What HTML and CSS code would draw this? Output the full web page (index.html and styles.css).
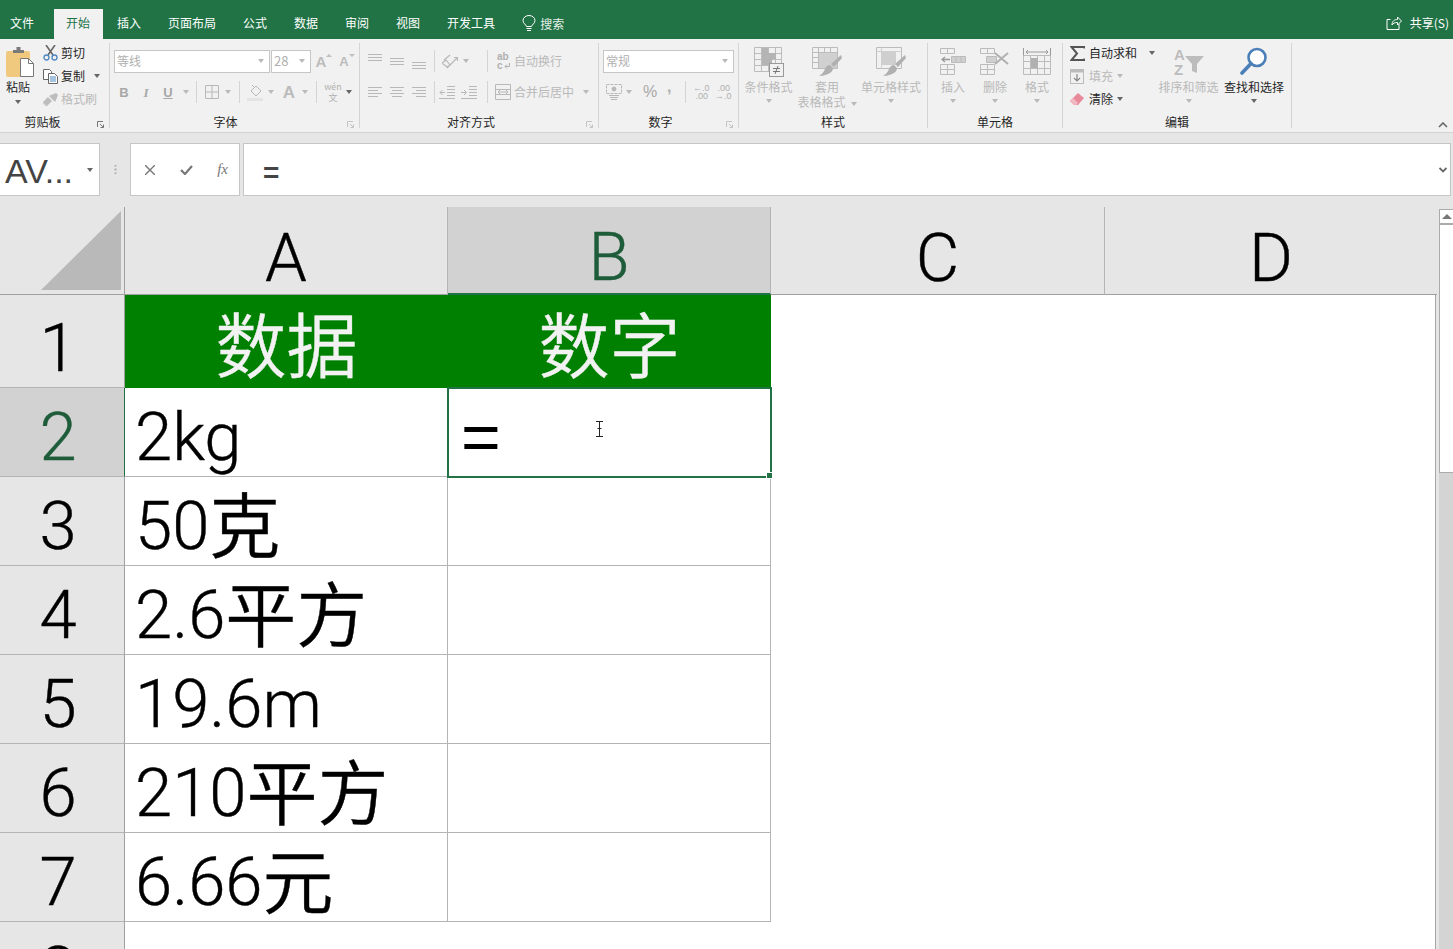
FILE: index.html
```html
<!DOCTYPE html>
<html lang="zh">
<head>
<meta charset="utf-8">
<title>Excel</title>
<link rel="stylesheet" href="styles.css">
</head>
<body>
<header class="titlebar">
  <nav class="tabs">
    <span class="tab tab-file">文件</span>
    <span class="tab active">开始</span>
    <span class="tab">插入</span>
    <span class="tab">页面布局</span>
    <span class="tab">公式</span>
    <span class="tab">数据</span>
    <span class="tab">审阅</span>
    <span class="tab">视图</span>
    <span class="tab">开发工具</span>
    <span class="tab tab-search">
      <svg class="ic" width="14" height="18" viewBox="0 0 14 18" fill="none" stroke="#fff" stroke-width="1"><path d="M4.5 11.5C4 9.500 1 8.500 1 5.500a6 5 0 0 1 12 0c0 3-3 4-3.500 6z"/><path d="M4.500 13.500h5M5 15.500h4"/></svg>
      <span>搜索</span>
    </span>
  </nav>
  <div class="share">
    <svg class="ic" width="16" height="16" viewBox="0 0 16 16" fill="none" stroke="#fff" stroke-width="1"><path d="M4.500 5.500H1v10h12V10"/><path d="M6 11c0-4 2.500-5.500 5.500-5.500V3L15.500 7l-4 4V8.500C9 8.500 7 9 6 11z"/></svg>
    <span>共享(S)</span>
  </div>
</header>

<section class="ribbon">
  <div class="group g-clip">
    <div class="body clip-body">
      <div class="big paste">
        <svg class="ic" width="29" height="31" viewBox="0 0 29 31"><rect x="0" y="4" width="24" height="26" rx="2" fill="#f0c97e"/><path d="M7 6V3h3.500V0h4v3H18v3z" fill="#7a7a7a"/><path d="M14.500 11.500h8l5 5v13h-13z" fill="#fff" stroke="#777"/><path d="M22.500 11.500v5h5" fill="none" stroke="#777"/></svg>
        <span class="lbl dark">粘贴</span>
        <i class="caret dk"></i>
      </div>
      <div class="small-col">
        <div class="small">
          <svg class="ic" width="15" height="16" viewBox="0 0 15 16" fill="none"><path d="M3 0l7 10M12 0L5 10" stroke="#666" stroke-width="1.600"/><circle cx="3.500" cy="12.500" r="2.500" stroke="#4d86c0" stroke-width="1.300"/><circle cx="11.500" cy="12.500" r="2.500" stroke="#4d86c0" stroke-width="1.300"/></svg>
          <span class="dark">剪切</span>
        </div>
        <div class="small">
          <svg class="ic" width="15" height="15" viewBox="0 0 15 15" fill="#fff" stroke="#666"><path d="M.5.500h6l2 2v8h-8z"/><path d="M5.500 4.500h6l3 3v7h-9z"/><path d="M7 8h6M7 10h6M7 12h6" stroke="#4d86c0"/></svg>
          <span class="dark">复制</span>
          <i class="caret dk copy-caret"></i>
        </div>
        <div class="small">
          <svg class="ic" width="15" height="13" viewBox="0 0 15 13" fill="#bdbdbd"><path d="M0 9l5-5 4 4-5 5H2l1-2-2 1z"/><path d="M6 3l2-1 5-2 2 2-2 5-1 2z"/></svg>
          <span class="mute">格式刷</span>
        </div>
      </div>
    </div>
    <div class="label lab-clip">剪贴板</div>
    <svg class="launch" width="7" height="7" viewBox="0 0 7 7" fill="none" stroke="#777"><path d="M.5 6V.5H6M3 3l3.500 3.500M6.500 3.500v3h-3"/></svg>
  </div>

  <div class="group g-font">
    <div class="body rows">
      <div class="row font-r1">
        <div class="select s-font"><span>等线</span><i class="caret"></i></div>
        <div class="select s-size"><span>28</span><i class="caret"></i></div>
        <div class="growa"><span class="a-big">A</span><i class="up"></i></div>
        <div class="growa"><span class="a-small">A</span><i class="down"></i></div>
      </div>
      <div class="row font-r2">
        <span class="btn w22 fb">B</span>
        <span class="btn w22 fi">I</span>
        <span class="btn w22 fu">U</span>
        <span class="btn w14"><i class="caret"></i></span>
        <i class="sep ml3"></i>
        <span class="btn w22 ml4"><svg class="ic" width="14" height="14" viewBox="0 0 14 14" fill="none" stroke="#b8b8b8"><path d="M.5.500h13v13H.5zM7 .5v13M.5 7h13"/></svg></span>
        <span class="btn w10"><i class="caret"></i></span>
        <i class="sep ml6"></i>
        <span class="btn w22 ml4"><svg class="ic" width="16" height="17" viewBox="0 0 16 17" fill="none" stroke="#b8b8b8"><path d="M4 7l5-5 5 5-5 5z"/><path d="M5 1l3 3"/><rect x="0" y="14" width="16" height="3" fill="#e4e4e4" stroke="none"/></svg></span>
        <span class="btn w10"><i class="caret"></i></span>
        <span class="btn w22 ml2 fa">A</span>
        <span class="btn w10"><i class="caret"></i></span>
        <i class="sep ml6"></i>
        <span class="btn w22 ml5 wen"><span>wén</span><span>文</span></span>
        <span class="btn w10"><i class="caret dk"></i></span>
      </div>
    </div>
    <div class="label lab-font">字体</div>
    <svg class="launch" width="7" height="7" viewBox="0 0 7 7" fill="none" stroke="#c4c4c4"><path d="M.5 6V.5H6M3 3l3.500 3.500M6.500 3.500v3h-3"/></svg>
  </div>

  <div class="group g-align">
    <div class="body rows">
      <div class="row align-r1">
        <span class="btn w22"><svg class="ic" width="14" height="16" viewBox="0 0 14 16" stroke="#b8b8b8"><path d="M0 1.500h14M0 4.500h14M0 7.500h14"/></svg></span>
        <span class="btn w22"><svg class="ic" width="14" height="16" viewBox="0 0 14 16" stroke="#b8b8b8"><path d="M0 5.500h14M0 8.500h14M0 11.500h14"/></svg></span>
        <span class="btn w22"><svg class="ic" width="14" height="16" viewBox="0 0 14 16" stroke="#b8b8b8"><path d="M0 9.500h14M0 12.500h14M0 15.500h14"/></svg></span>
        <i class="sep ml4"></i>
        <span class="btn w22 ml4"><svg class="ic" width="16" height="15" viewBox="0 0 16 15" fill="none" stroke="#b8b8b8" stroke-width="1.200"><path d="M2 6l6-5M0 9l5 4 3-2-4-5zM5 14L15 4M12 3.500h3.500V7"/></svg></span>
        <span class="btn w10"><i class="caret"></i></span>
        <i class="sep ml16"></i>
        <span class="btn-t ml9"><span class="abc"><span>ab</span><span class="abc2">c<svg class="ic" width="6" height="6" viewBox="0 0 6 6" fill="none" stroke="#b0b0b0"><path d="M5.500 0v3.500H1M3 1.500L1 3.500 3 5.500"/></svg></span></span><span class="mute">自动换行</span></span>
      </div>
      <div class="row align-r2">
        <span class="btn w22"><svg class="ic" width="14" height="11" viewBox="0 0 14 11" stroke="#b8b8b8"><path d="M0 .5h14M0 3.500h10M0 6.500h14M0 9.500h10"/></svg></span>
        <span class="btn w22"><svg class="ic" width="14" height="11" viewBox="0 0 14 11" stroke="#b8b8b8"><path d="M0 .5h14M2 3.500h10M0 6.500h14M2 9.500h10"/></svg></span>
        <span class="btn w22"><svg class="ic" width="14" height="11" viewBox="0 0 14 11" stroke="#b8b8b8"><path d="M0 .5h14M4 3.500h10M0 6.500h14M4 9.500h10"/></svg></span>
        <i class="sep ml4"></i>
        <span class="btn w22 ml1"><svg class="ic" width="16" height="13" viewBox="0 0 16 13" fill="none" stroke="#b8b8b8"><path d="M8 .5h8M8 3.500h8M8 6.500h8M8 9.500h8M0 12.500h16M6 6.500H1M3.500 4l-2.500 2.500L3.500 9"/></svg></span>
        <span class="btn w22"><svg class="ic" width="16" height="13" viewBox="0 0 16 13" fill="none" stroke="#b8b8b8"><path d="M8 .5h8M8 3.500h8M8 6.500h8M8 9.500h8M0 12.500h16M0 6.500h5M3 4l2.500 2.500L3 9"/></svg></span>
        <i class="sep ml7"></i>
        <span class="btn-t ml7"><svg class="ic" width="16" height="16" viewBox="0 0 16 16" fill="none" stroke="#b8b8b8"><path d="M.5.500h15v15H.5zM.5 5.500h15M.5 10.500h15M3 8h10M3 8l2-2M3 8l2 2M13 8l-2-2M13 8l-2 2"/></svg><span class="mute">合并后居中</span></span>
        <span class="btn w10 ml7"><i class="caret"></i></span>
      </div>
    </div>
    <div class="label lab-align">对齐方式</div>
    <svg class="launch" width="7" height="7" viewBox="0 0 7 7" fill="none" stroke="#c4c4c4"><path d="M.5 6V.5H6M3 3l3.500 3.500M6.500 3.500v3h-3"/></svg>
  </div>

  <div class="group g-num">
    <div class="body rows">
      <div class="row num-r1">
        <div class="select s-num"><span>常规</span><i class="caret"></i></div>
      </div>
      <div class="row num-r2">
        <span class="btn w16"><svg class="ic" width="16" height="16" viewBox="0 0 16 16" fill="none" stroke="#b8b8b8"><rect x=".5" y=".5" width="15" height="9" stroke-dasharray="3 1"/><circle cx="8" cy="5" r="2" fill="#b8b8b8"/><path d="M3 11.500h10M4 13.500h8M5 15.500h6"/></svg></span>
        <span class="btn w14"><i class="caret"></i></span>
        <span class="pct">%</span>
        <span class="comma">,</span>
        <i class="sep ml12"></i>
        <span class="dec ml7"><span>←.0</span><span>.00</span></span>
        <span class="dec ml7"><span>.00</span><span>→.0</span></span>
      </div>
    </div>
    <div class="label lab-num">数字</div>
    <svg class="launch" width="7" height="7" viewBox="0 0 7 7" fill="none" stroke="#c4c4c4"><path d="M.5 6V.5H6M3 3l3.500 3.500M6.500 3.500v3h-3"/></svg>
  </div>

  <div class="group g-style">
    <div class="body bigs style-body">
      <div class="big w49">
        <svg class="ic" width="30" height="30" viewBox="0 0 30 30" fill="none"><path d="M.5 .5h27v24H.5zM.5 6.500h27M.5 12.500h27M.5 18.500h27M7.500 .5v24M14.500 .5v24M21.500 .5v24" stroke="#bcbcbc"/><path d="M8 1h6v5h8v6h-4v6H8z" fill="#b4b4b4"/><rect x="15.500" y="16.500" width="14" height="13" fill="#f1f1f1" stroke="#999"/><path d="M19 21.500h7M19 24.500h7M24 19l-3 8" stroke="#777"/></svg>
        <span class="lbl mute">条件格式</span>
        <i class="caret"></i>
      </div>
      <div class="big w58">
        <svg class="ic" width="30" height="30" viewBox="0 0 30 30" fill="none"><path d="M.5 .5h25v21H.5zM.5 5.500h25M.5 10.500h25M.5 15.500h25M6.500 .5v21M12.500 .5v21M18.500 .5v21" stroke="#bcbcbc"/><rect x="7" y="6" width="18" height="15" fill="#d0d0d0"/><path d="M29 8l1 3-8 9-3-3zM18 18l3 3c0 3-2 5-5 6 -3 1-5 2-9 2 3-2 5-4 6-7 1-3 3-4 5-4z" fill="#b0b0b0"/></svg>
        <span class="lbl mute">套用</span>
        <span class="lbl mute two">表格格式<i class="caret inl"></i></span>
      </div>
      <div class="big w60">
        <svg class="ic" width="30" height="30" viewBox="0 0 30 30" fill="none"><path d="M.5 .5h25v21H.5z" stroke="#bcbcbc"/><path d="M.5 4.500h25M5.500 .5v21" stroke="#d0d0d0"/><rect x="6" y="5" width="14" height="13" fill="#cfcfcf"/><path d="M29 8l1 3-8 9-3-3zM18 18l3 3c0 3-2 5-5 6-3 1-5 2-9 2 3-2 5-4 6-7 1-3 3-4 5-4z" fill="#b0b0b0"/></svg>
        <span class="lbl mute">单元格样式</span>
        <i class="caret"></i>
      </div>
    </div>
    <div class="label">样式</div>
  </div>

  <div class="group g-cell">
    <div class="body bigs cell-body">
      <div class="big w26">
        <svg class="ic" width="26" height="30" viewBox="0 0 26 30" fill="none" stroke="#bcbcbc"><path d="M.5 1.500h14v5H.5zM7.500 1.500v5M.5 17.500h14v10H.5zM.5 22.500h14M7.500 17.500v10"/><path d="M11.500 9.500h14v6h-14zM16 9.500v6M21 9.500v6" fill="#d0d0d0"/><path d="M10 12.500H2M5 10l-3 2.500L5 15" stroke="#999" stroke-width="1.300"/></svg>
        <span class="lbl mute">插入</span>
        <i class="caret"></i>
      </div>
      <div class="big w26">
        <svg class="ic" width="30" height="30" viewBox="0 0 30 30" fill="none" stroke="#bcbcbc"><path d="M.5 1.500h14v5H.5zM7.500 1.500v5M.5 17.500h14v10H.5zM.5 22.500h14M7.500 17.500v10"/><path d="M6.500 9.500h10v6h-10z" fill="#d0d0d0"/><path d="M15 6l13 11M28 6L15 17" stroke="#b0b0b0" stroke-width="2"/></svg>
        <span class="lbl mute">删除</span>
        <i class="caret"></i>
      </div>
      <div class="big w26">
        <svg class="ic" width="28" height="30" viewBox="0 0 28 30" fill="none" stroke="#bcbcbc"><path d="M.5 1v8M27.500 1v8M3 5h22M3 5l2-2M3 5l2 2M25 5l-2-2M25 5l-2 2" stroke="#999"/><path d="M.5 8.500h27v19H.5zM.5 14.500h27M.5 21.500h27M7.500 8.500v19M14.500 8.500v19M21.500 8.500v19"/><rect x="8" y="11" width="7" height="10" fill="#b0b0b0" stroke="none"/></svg>
        <span class="lbl mute">格式</span>
        <i class="caret"></i>
      </div>
    </div>
    <div class="label">单元格</div>
  </div>

  <div class="group g-edit">
    <div class="body edit-body">
      <div class="small-col edit-col">
        <div class="small">
          <svg class="ic" width="15" height="15" viewBox="0 0 15 15" fill="none" stroke="#555" stroke-width="2"><path d="M14.500 2.500V1H1.500L7 7.500 1.500 14H14.500v-1.500"/></svg>
          <span class="dark">自动求和</span>
          <i class="caret dk sum-caret"></i>
        </div>
        <div class="small">
          <svg class="ic i14" width="14" height="15" viewBox="0 0 14 15" fill="none" stroke="#bcbcbc"><rect x=".5" y=".5" width="13" height="14"/><rect x="0" y="0" width="14" height="3" fill="#bcbcbc"/><path d="M7 5v7M4 9l3 3 3-3" stroke="#888" stroke-width="1.200"/></svg>
          <span class="mute">填充</span>
          <i class="caret"></i>
        </div>
        <div class="small">
          <svg class="ic i14" width="14" height="13" viewBox="0 0 14 13"><path d="M0 8l8-8 6 5-6 7H4z" fill="#e98a9a"/><path d="M0 8l3-3 5 5-2 2H4z" fill="#f2b8c1"/></svg>
          <span class="dark">清除</span>
          <i class="caret dk"></i>
        </div>
      </div>
      <div class="big w61">
        <svg class="ic sort-ic" width="30" height="30" viewBox="0 0 30 30" fill="#bcbcbc"><text x="0" y="13" class="az">A</text><text x="0" y="28" class="az">Z</text><path d="M11 9h19l-7 8v9l-5-2v-7z"/></svg>
        <span class="lbl mute">排序和筛选</span>
        <i class="caret"></i>
      </div>
      <div class="big w60 find">
        <svg class="ic" width="28" height="28" viewBox="0 0 28 28" fill="none" stroke="#4a7fb8"><circle cx="17" cy="10.500" r="8.500" stroke-width="2.600" fill="#fff"/><path d="M11 16.500L2 26" stroke-width="3.600" stroke-linecap="round"/></svg>
        <span class="lbl dark">查找和选择</span>
        <i class="caret dk"></i>
      </div>
    </div>
    <div class="label">编辑</div>
  </div>

  <svg class="collapse" width="10" height="6" viewBox="0 0 10 6" fill="none" stroke="#666" stroke-width="1.600"><path d="M1 5l4-4 4 4"/></svg>
</section>

<section class="fbar">
  <div class="namebox"><span>AV...</span><i class="caret dk"></i></div>
  <div class="dots"></div>
  <div class="fbtns">
    <svg class="ic" width="10" height="10" viewBox="0 0 10 10" stroke="#777" stroke-width="1.400"><path d="M0 0l10 10M10 0L0 10"/></svg>
    <svg class="ic" width="13" height="10" viewBox="0 0 13 10" fill="none" stroke="#777" stroke-width="2.200"><path d="M1 5l4 4 7-8"/></svg>
    <span class="fx">fx</span>
  </div>
  <div class="finput"><span class="ftext">=</span>
    <svg class="ic fchev" width="8" height="6" viewBox="0 0 8 6" fill="none" stroke="#666" stroke-width="1.800"><path d="M.5 1l3.500 3.500L7.500 1"/></svg>
  </div>
</section>

<main class="sheetwrap">
  <div class="sheet">
    <div class="corner"><svg width="80" height="79" viewBox="0 0 80 79"><path d="M80 0v79H0z" fill="#b9b9b9"/></svg></div>
    <div class="colh">A</div>
    <div class="colh sel">B</div>
    <div class="colh">C</div>
    <div class="colh last">D</div>

    <div class="rowh r1">1</div>
    <div class="cell head">数据</div>
    <div class="cell head">数字</div>
    <div class="blank"></div>

    <div class="rowh sel">2</div>
    <div class="cell">2kg</div>
    <div class="cell current">=
      <svg class="ibeam" width="7" height="16" viewBox="0 0 7 16" fill="none" stroke="#222"><path d="M0 .5h7M0 15.500h7M3.500 .5v15M1.500 7.500h4"/></svg>
    </div>
    <div class="blank"></div>

    <div class="rowh">3</div>
    <div class="cell"><span>50</span><span class="cjk">克</span></div>
    <div class="cell"></div>
    <div class="blank"></div>

    <div class="rowh">4</div>
    <div class="cell"><span>2.6</span><span class="cjk">平方</span></div>
    <div class="cell"></div>
    <div class="blank"></div>

    <div class="rowh">5</div>
    <div class="cell">19.6m</div>
    <div class="cell"></div>
    <div class="blank"></div>

    <div class="rowh">6</div>
    <div class="cell"><span>210</span><span class="cjk">平方</span></div>
    <div class="cell"></div>
    <div class="blank"></div>

    <div class="rowh">7</div>
    <div class="cell"><span>6.66</span><span class="cjk">元</span></div>
    <div class="cell"></div>
    <div class="blank"></div>

    <div class="rowh">8</div>
    <div class="blank wide"></div>
  </div>
  <aside class="vscroll">
    <div class="sb-up"><i class="up dkup"></i></div>
    <div class="sb-thumb"></div>
  </aside>
</main>
</body>
</html>
```
FILE: styles.css
```css
* { box-sizing: border-box; }
html, body { margin: 0; padding: 0; }
body {
  width: 1453px;
  height: 949px;
  overflow: hidden;
  background: #e6e6e6;
  font: 12px/15px "Noto Sans CJK SC", "Liberation Sans", sans-serif;
  color: #262626;
}
i { display: block; font-style: normal; }
.ic { display: block; flex: none; }

/* title / tabs */
.titlebar {
  height: 39px;
  background: #217346;
  display: flex;
  justify-content: space-between;
  align-items: flex-end;
  color: #fff;
}
.tabs { display: flex; align-items: flex-end; }
.tab {
  height: 30px;
  line-height: 28px;
  padding: 0 13px;
  margin-right: 1px;
  white-space: nowrap;
}
.tab-file { padding: 0 10px; margin-right: 10px; }
.tab.active { background: #f1f1f1; color: #217346; padding: 0 12px; margin-right: 1px; width: 49px; }
.tab-search { display: flex; align-items: center; gap: 4px; padding-left: 13px; color: #e6f0ea; }
.share { display: flex; align-items: center; gap: 8px; height: 34px; padding-right: 4px; }

/* ribbon */
.ribbon {
  height: 94px;
  padding: 4px 0;
  background: #f1f1f1;
  border-bottom: 1px solid #d4d4d4;
  display: flex;
}
.group {
  position: relative;
  height: 85px;
  border-right: 1px solid #d4d4d4;
  display: flex;
  flex-direction: column;
  flex: none;
}
.g-clip { width: 110px; }
.g-font { width: 250px; }
.g-align { width: 239px; }
.g-num { width: 140px; }
.g-style { width: 189px; }
.g-cell { width: 135px; }
.g-edit { width: 229px; }
.body { flex: 1; display: flex; min-height: 0; }
.label { height: 13px; line-height: 13px; text-align: center; color: #262626; }
.lab-clip { padding-right: 24px; }
.lab-font { padding-right: 18px; }
.lab-align { padding-right: 16px; }
.lab-num { padding-right: 16px; }
.launch { position: absolute; right: 5px; bottom: 0; }
.collapse { align-self: flex-end; margin: 0 5px 0 auto; }
.dark { color: #262626; }
.mute { color: #b9b9b9; }

/* carets */
.caret {
  width: 0; height: 0; flex: none;
  border-left: 3.5px solid transparent;
  border-right: 3.5px solid transparent;
  border-top: 4px solid #b9b9b9;
}
.caret.dk { border-top-color: #666; }
.caret.inl { display: inline-block; margin-left: 5px; vertical-align: middle; }
.up, .down { width: 0; height: 0; border-left: 3px solid transparent; border-right: 3px solid transparent; }
.up { border-bottom: 3px solid #c0c0c0; }
.down { border-top: 3px solid #c0c0c0; }
.dkup { border-left-width: 5px; border-right-width: 5px; border-bottom: 5px solid #777; }

/* big buttons */
.big { display: flex; flex-direction: column; align-items: center; flex: none; padding-top: 4px; }
.big .lbl { margin-top: 2px; white-space: nowrap; }
.big .caret { margin-top: 5px; }
.big .two { margin-top: 0; }
.big .two .caret { margin-top: 0; }
.w26 { width: 26px; }
.w49 { width: 49px; }
.w58 { width: 58px; }
.w60 { width: 60px; }
.w61 { width: 61px; }

.clip-body { padding-left: 6px; }
.paste { width: 24px; align-items: flex-start; }
.paste .caret { margin-left: 9px; margin-top: 6px; }
.paste .lbl { margin-top: 1px; }
.small-col { display: flex; flex-direction: column; gap: 3px; margin-left: 13px; }
.small { height: 20px; display: flex; align-items: center; gap: 3px; white-space: nowrap; }
.small span { padding-bottom: 2px; }
.copy-caret { margin-left: 6px; }

.style-body { padding-left: 5px; gap: 5px; }
.cell-body { padding-left: 12px; gap: 16px; }
.edit-body { padding-left: 7px; }
.edit-col { margin-left: 0; width: 88px; }
.edit-col .small { gap: 4px; }
.i14 { margin-right: 1px; }
.sum-caret { margin-left: 8px; }
.find { margin-left: 5px; }
.find .lbl { margin-top: 4px; }

/* rows */
.rows { flex-direction: column; padding-top: 7px; gap: 9px; }
.row { height: 22px; display: flex; align-items: center; flex: none; }
.select {
  height: 23px;
  background: #fff;
  border: 1px solid #c6c6c6;
  display: flex;
  align-items: center;
  justify-content: space-between;
  padding: 0 5px 0 2px;
  color: #b0b0b0;
  flex: none;
}
.select span { padding-bottom: 2px; }
.font-r1 { padding-left: 4px; gap: 1px; }
.s-font { width: 156px; }
.s-size { width: 40px; }
.s-size span { font-size: 13px; }
.growa { display: flex; width: 20px; margin-left: 2px; align-items: flex-start; justify-content: center; }
.a-big, .a-small, .fa { font-family: "Liberation Sans", sans-serif; font-weight: 700; color: #bcbcbc; }
.a-big { font-size: 15px; }
.a-small { font-size: 13px; }
.font-r2 { padding-left: 3px; }
.btn { display: flex; align-items: center; justify-content: center; flex: none; height: 22px; }
.w10 { width: 10px; }
.w14 { width: 14px; }
.w16 { width: 16px; }
.w22 { width: 22px; }
.ml1 { margin-left: 1px; }
.ml2 { margin-left: 2px; }
.ml3 { margin-left: 3px; }
.ml4 { margin-left: 4px; }
.ml5 { margin-left: 5px; }
.ml6 { margin-left: 6px; }
.ml7 { margin-left: 7px; }
.ml9 { margin-left: 9px; }
.ml12 { margin-left: 12px; }
.ml16 { margin-left: 16px; }
.sep { width: 1px; height: 22px; background: #d4d4d4; flex: none; }
.fb, .fi, .fu { font-family: "Liberation Sans", sans-serif; color: #a8a8a8; font-size: 13px; }
.fb { font-weight: 700; }
.fi { font-family: "Liberation Serif", serif; font-style: italic; font-weight: 700; }
.fu { text-decoration: underline; font-weight: 700; }
.fa { font-size: 17px; }
.wen { flex-direction: column; font-size: 9px; line-height: 11px; color: #b0b0b0; }

.align-r1, .align-r2 { padding-left: 4px; }
.btn-t { display: flex; align-items: center; gap: 3px; white-space: nowrap; }
.btn-t .mute { padding-bottom: 2px; }
.abc { display: flex; flex-direction: column; width: 14px; font: 700 10px/9px "Liberation Sans", sans-serif; color: #b0b0b0; }
.abc2 { display: flex; align-items: center; gap: 1px; }

.num-r1 { padding-left: 4px; }
.s-num { width: 131px; }
.num-r2 { padding-left: 7px; }
.pct { font: 16px/22px "Liberation Sans", sans-serif; color: #a8a8a8; width: 14px; margin-left: 7px; }
.comma { align-self: flex-start; font: 700 16px/12px "Liberation Sans", sans-serif; color: #b0b0b0; margin-left: 10px; width: 6px; }
.dec { display: flex; flex-direction: column; width: 15px; font: 9px/8px "Liberation Sans", sans-serif; color: #b0b0b0; text-align: right; white-space: nowrap; }
.az { font: 700 15px "Liberation Sans", sans-serif; fill: #bcbcbc; }

/* formula bar */
.fbar {
  height: 74px;
  display: flex;
  padding: 10px 2px 11px 0;
  background: #e6e6e6;
}
.namebox {
  width: 100px;
  background: #fff;
  border: 1px solid #c6c6c6;
  border-left: 0;
  display: flex;
  align-items: center;
  justify-content: space-between;
  padding: 0 6px 0 5px;
  font: 34px "Liberation Sans", sans-serif;
  color: #444;
}
.namebox span { padding-top: 3px; }
.dots {
  width: 30px;
  margin: 22px 0;
  background: radial-gradient(circle, #aaa 1px, transparent 1.2px) center / 3px 4px repeat-y;
}
.fbtns {
  width: 110px;
  background: #fff;
  border: 1px solid #c6c6c6;
  display: flex;
  align-items: center;
  justify-content: space-between;
  padding: 0 11px 0 14px;
}
.fx { font: italic 15px "Liberation Serif", serif; color: #777; }
.finput {
  flex: 1;
  margin-left: 3px;
  background: #fff;
  border: 1px solid #c6c6c6;
  display: flex;
  align-items: center;
  justify-content: space-between;
  padding: 0 3px 0 19px;
}
.ftext { font: 700 28px "Liberation Sans", sans-serif; color: #444; padding-top: 6px; }

/* sheet */
.sheetwrap { display: flex; height: 742px; overflow: hidden; }
.sheet {
  width: 1436px;
  display: grid;
  grid-template-columns: 125px 323px 323px 334px 331px;
  grid-template-rows: 88px 93px 89px 89px 89px 89px 89px 89px 89px;
  background: #fff;
  font: 350 67px/1 Roboto, "Noto Sans CJK SC", sans-serif;
  -webkit-text-stroke: 0.4px currentColor;
  color: #000;
  flex: none;
  border-right: 1px solid #a6a6a6;
}
.corner {
  background: #e6e6e6;
  border-right: 1px solid #a0a0a0;
  border-bottom: 1px solid #a0a0a0;
  display: flex;
  align-items: flex-end;
  justify-content: flex-end;
  padding: 0 3px 4px 0;
}
.corner svg { display: block; }
.colh {
  background: #e6e6e6;
  border-right: 1px solid #b4b4b4;
  border-bottom: 1px solid #a0a0a0;
  display: flex;
  align-items: center;
  justify-content: center;
  padding-top: 15px;
}
.colh.last { border-right: 0; margin-right: -1px; }
.colh.sel { background: #d2d2d2; color: #1e5c3a; border-bottom: 2px solid #217346; }
.rowh {
  background: #e6e6e6;
  border-right: 1px solid #a0a0a0;
  border-bottom: 1px solid #b4b4b4;
  display: flex;
  align-items: center;
  justify-content: center;
  padding: 10px 8px 0 0;
}
.rowh.r1 { padding-top: 14px; }
.rowh.sel { background: #d2d2d2; color: #1e5c3a; border-right-color: #217346; }
.cell {
  border-right: 1px solid #b4b4b4;
  border-bottom: 1px solid #b4b4b4;
  display: flex;
  align-items: center;
  padding: 10px 0 0 10px;
  white-space: nowrap;
}
.cjk {
  font: 350 71px/1 "Noto Sans CJK SC", sans-serif;
  padding-bottom: 9px;
}
.cell.head {
  background: #008000;
  color: #f2f2f2;
  justify-content: center;
  padding: 0;
  border-right: 0;
  border-bottom: 0;
  font: 350 71px/1 "Noto Sans CJK SC", sans-serif;
}
.cell.current {
  position: relative;
  outline: 2px solid #217346;
  outline-offset: -1px;
  padding-left: 13px;
  z-index: 1;
  -webkit-text-stroke: 0;
  font: 400 68px/1 "Liberation Sans", sans-serif;
}
.cell.current::after {
  content: "";
  position: absolute;
  right: -3px;
  bottom: -3px;
  width: 5px;
  height: 5px;
  background: #217346;
  border: 1px solid #fff;
}
.ibeam { position: absolute; left: 148px; top: 33px; }
.blank { grid-column: 4 / 6; }
.blank.wide { grid-column: 2 / 6; }

/* scrollbar */
.vscroll { width: 17px; padding: 2px 0 0 3px; display: flex; flex-direction: column; }
.sb-up {
  height: 16px;
  background: #fff;
  border: 1px solid #ababab;
  border-right: 0;
  border-bottom: 2px solid #ababab;
  display: flex;
  align-items: center;
  justify-content: center;
}
.sb-thumb {
  height: 248px;
  background: #fff;
  border: 1px solid #ababab;
  border-top: 0;
  border-right: 0;
}
.vscroll::after { content: ""; flex: 1; background: #d4d4d4; }
```
